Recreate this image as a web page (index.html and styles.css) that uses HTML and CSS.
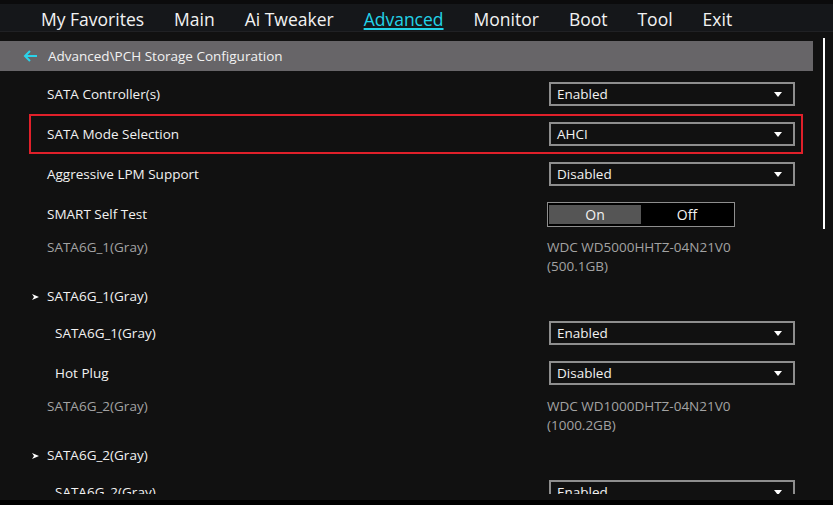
FILE: index.html
```html
<!DOCTYPE html>
<html lang="en">
	<head>
		<meta charset="UTF-8" />
		<title>PCH Storage Configuration</title>
		<link rel="stylesheet" href="styles.css">
	</head>
	<body>
		<div class="screen">
			<div class="topbar">
				<span class="tab">My Favorites</span>
				<span class="tab">Main</span>
				<span class="tab">Ai Tweaker</span>
				<span class="tab active">Advanced</span>
				<span class="tab">Monitor</span>
				<span class="tab">Boot</span>
				<span class="tab">Tool</span>
				<span class="tab">Exit</span>
			</div>

			<div class="main">
				<div class="content">
					<div class="crumb">
						<svg class="back" width="15" height="12" viewBox="0 0 15 12">
							<path d="M14 6H2M7 1L2 6l5 5" fill="none" stroke="#2ad3ea" stroke-width="2" />
						</svg>
						<span>Advanced\PCH Storage Configuration</span>
					</div>

					<div class="list">
						<div class="row">
							<div class="label">SATA Controller(s)</div>
							<div class="select">Enabled<i class="caret"></i></div>
						</div>
						<div class="row selected">
							<div class="label">SATA Mode Selection</div>
							<div class="select">AHCI<i class="caret"></i></div>
						</div>
						<div class="row">
							<div class="label">Aggressive LPM Support</div>
							<div class="select">Disabled<i class="caret"></i></div>
						</div>
						<div class="row">
							<div class="label">SMART Self Test</div>
							<div class="toggle">
								<span class="seg on">On</span>
								<span class="seg">Off</span>
							</div>
						</div>

						<div class="row info">
							<div class="label dim">SATA6G_1(Gray)</div>
							<div class="value">WDC WD5000HHTZ-04N21V0<br>(500.1GB)</div>
						</div>
						<div class="row group">
							<div class="label">
								<svg width="7" height="6" viewBox="0 0 7 6"><polygon points="0,0 7,3 0,6 2,3" fill="#fff" /></svg>
								SATA6G_1(Gray)
							</div>
						</div>
						<div class="row sub">
							<div class="label">SATA6G_1(Gray)</div>
							<div class="select">Enabled<i class="caret"></i></div>
						</div>
						<div class="row sub">
							<div class="label">Hot Plug</div>
							<div class="select">Disabled<i class="caret"></i></div>
						</div>

						<div class="row info">
							<div class="label dim">SATA6G_2(Gray)</div>
							<div class="value">WDC WD1000DHTZ-04N21V0<br>(1000.2GB)</div>
						</div>
						<div class="row group">
							<div class="label">
								<svg width="7" height="6" viewBox="0 0 7 6"><polygon points="0,0 7,3 0,6 2,3" fill="#fff" /></svg>
								SATA6G_2(Gray)
							</div>
						</div>
						<div class="row sub">
							<div class="label">SATA6G_2(Gray)</div>
							<div class="select">Enabled<i class="caret"></i></div>
						</div>
					</div>
				</div>

				<div class="scrollbar"></div>
			</div>
		</div>
	</body>
</html>
```

FILE: styles.css
```css
body {
	margin: 0;
	background-color: #000;
	font-family: "Open Sans", "DejaVu Sans", sans-serif;
	color: #f2f2f2;
}

.screen {
	height: 500px;
	background-color: #111;
	overflow: hidden;
}

.topbar {
	height: 32px;
	box-sizing: border-box;
	padding: 7px 0 0 41px;
	display: flex;
	gap: 30px;
	background: linear-gradient(#0b0b0c 0, #0b0b0c 4px, #15171a 4px);
	border-bottom: 1px solid #202124;
	font-size: 17.5px;
	line-height: 24px;
}

.tab.active {
	color: #22d3e8;
	text-decoration: underline;
	text-decoration-thickness: 2px;
	text-underline-offset: 2px;
}

.main {
	display: flex;
	height: 467px;
}

.content {
	width: 813px;
	display: flex;
	flex-direction: column;
}

.crumb {
	margin-top: 9px;
	height: 30px;
	background-color: #676568;
	display: flex;
	align-items: center;
	gap: 10px;
	padding-left: 23px;
	font-size: 13.5px;
}

.scrollbar {
	margin: 6px 0 0 10px;
	width: 2px;
	height: 191px;
	background-color: #fff;
}

.list {
	height: 423px;
	padding-top: 3px;
	box-sizing: border-box;
	overflow: hidden;
	font-size: 13.5px;
	line-height: 19px;
}

.row {
	margin-left: 29px;
	width: 774px;
	height: 40px;
	box-sizing: border-box;
	padding: 0 6px 0 16px;
	border: 2px solid transparent;
	display: grid;
	grid-template-columns: 500px 1fr;
	align-items: center;
}

.row.selected {
	border-color: #e0202a;
}

.row.sub .label {
	padding-left: 8px;
}

.row.info {
	height: 42px;
	align-items: start;
	padding-top: 2px;
}

.row.group {
	height: 37px;
	align-items: start;
	padding-top: 9px;
}

.row.group .label {
	display: flex;
	align-items: center;
	gap: 8px;
	margin-left: -15px;
}

.dim,
.value {
	color: #a3a3a3;
}

.select {
	margin-left: 2px;
	height: 24px;
	box-sizing: border-box;
	border: 2px solid #8e8e8e;
	padding: 0 11px 0 6px;
	display: flex;
	align-items: center;
	justify-content: space-between;
	font-size: 13.5px;
}

.caret {
	width: 0;
	height: 0;
	border-left: 4px solid transparent;
	border-right: 4px solid transparent;
	border-top: 5px solid #fff;
}

.toggle {
	width: 188px;
	height: 25px;
	box-sizing: border-box;
	border: 1px solid #8e8e8e;
	padding: 2px 1px;
	background-color: #000;
	display: flex;
}

.seg {
	flex: 1;
	display: flex;
	align-items: center;
	justify-content: center;
	font-size: 14px;
}

.seg.on {
	background-color: #555;
}
```
